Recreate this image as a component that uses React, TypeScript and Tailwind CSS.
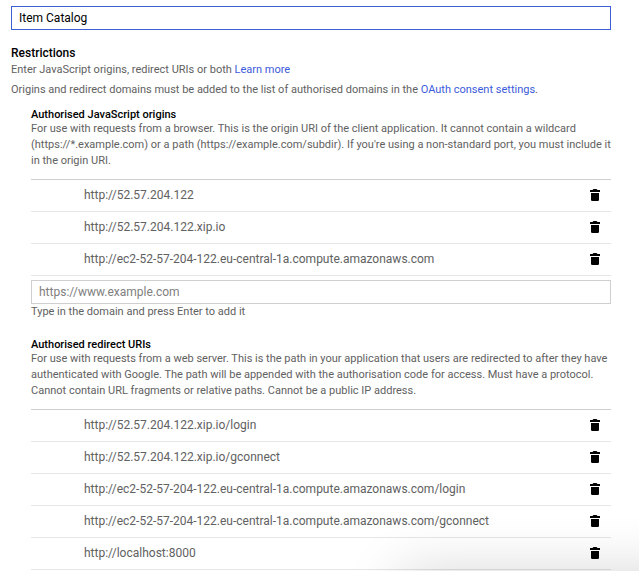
const origins = [
  'http://52.57.204.122',
  'http://52.57.204.122.xip.io',
  'http://ec2-52-57-204-122.eu-central-1a.compute.amazonaws.com',
];

const redirects = [
  'http://52.57.204.122.xip.io/login',
  'http://52.57.204.122.xip.io/gconnect',
  'http://ec2-52-57-204-122.eu-central-1a.compute.amazonaws.com/login',
  'http://ec2-52-57-204-122.eu-central-1a.compute.amazonaws.com/gconnect',
  'http://localhost:8000',
];

function TrashIcon() {
  return (
    <svg viewBox="0 0 16 16" className="size-4" fill="#000" aria-hidden="true">
      <path d="M3 3h2.500l1-1h3l1 1H13v2H3z" />
      <path d="M4 6h8v6.700a1.300 1.300 0 0 1-1.300 1.300H5.300A1.300 1.300 0 0 1 4 12.700z" />
    </svg>
  );
}

function UriList({ items }: { items: string[] }) {
  return (
    <ul className="border-t border-[#cfcfcf]">
      {items.map((uri) => (
        <li
          key={uri}
          className="flex h-8 items-center justify-between border-b border-[#e6e6e6] pr-2 pb-px pl-[53px] text-xs text-[#616161]"
        >
          <span>{uri}</span>
          <button type="button" aria-label={`Delete ${uri}`} className="size-4">
            <TrashIcon />
          </button>
        </li>
      ))}
    </ul>
  );
}

export default function App() {
  return (
    <main className="relative h-screen overflow-hidden bg-white pt-1.5 pr-7 pl-[11px] font-[Roboto,sans-serif] text-[11px] leading-4 text-[#616161]">
      <input
        aria-label="Name"
        defaultValue="Item Catalog"
        className="block h-6 w-full border border-[#3b5fd4] px-[7px] text-xs text-black outline-none"
      />
      <h1 className="mt-[15px] text-xs leading-4 font-medium text-black">Restrictions</h1>
      <p className="mt-px">
        Enter JavaScript origins, redirect URIs or both{' '}
        <a href="#learn" className="text-[#3b5bdb]">Learn more</a>
      </p>
      <p className="mt-1">
        Origins and redirect domains must be added to the list of authorised domains in the{' '}
        <a href="#consent" className="text-[#3b5bdb]">OAuth consent settings</a>.
      </p>
      <section className="mt-[9px] pl-5">
        <h2 className="font-medium text-black">Authorised JavaScript origins</h2>
        <p className="-mt-0.5 mb-2.5">
          For use with requests from a browser. This is the origin URI of the client application. It cannot contain a
          wildcard (https://*.example.com) or a path (https://example.com/subdir). If you're using a non-standard port,
          you must include it in the origin URI.
        </p>
        <UriList items={origins} />
        <input
          aria-label="Add JavaScript origin"
          placeholder="https://www.example.com"
          className="mt-1 block h-6 w-full border border-[#cfcfcf] px-[7px] text-xs outline-none placeholder:text-[#808080]"
        />
        <p>Type in the domain and press Enter to add it</p>
      </section>
      <section className="mt-[17px] pl-5">
        <h2 className="font-medium text-black">Authorised redirect URIs</h2>
        <p className="-mt-0.5 mb-2.5">
          For use with requests from a web server. This is the path in your application that users are redirected to
          after they have authenticated with Google. The path will be appended with the authorisation code for access.
          Must have a protocol. Cannot contain URL fragments or relative paths. Cannot be a public IP address.
        </p>
        <UriList items={redirects} />
      </section>
      <div className="pointer-events-none absolute top-full -right-16 left-[400px] h-40 shadow-[0_0_56px_rgba(0,0,0,0.16)]" />
    </main>
  );
}
